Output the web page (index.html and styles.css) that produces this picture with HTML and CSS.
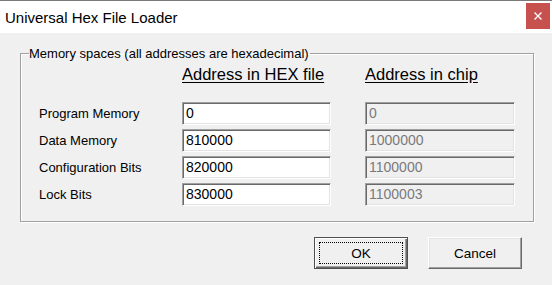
FILE: index.html
```html
<!DOCTYPE html>
<html>
<head>
<meta charset="utf-8">
<title>Universal Hex File Loader</title>
<link rel="stylesheet" href="styles.css">
</head>
<body>
<div class="window">
  <div class="titlebar">
    <span class="title">Universal Hex File Loader</span>
    <span class="close"><svg width="8" height="8" viewBox="0 0 8 8"><path d="M0.5 0.5 L7.5 7.5 M7.5 0.5 L0.5 7.5" stroke="#fff" stroke-width="1.4" fill="none"/></svg></span>
  </div>
  <div class="client">
    <fieldset class="group">
      <legend class="legend">Memory spaces (all addresses are hexadecimal)</legend>
      <div class="grid">
        <span></span>
        <span class="head">Address in HEX file</span>
        <span class="head">Address in chip</span>

        <span class="label">Program Memory</span>
        <span class="field">0</span>
        <span class="field off">0</span>

        <span class="label">Data Memory</span>
        <span class="field">810000</span>
        <span class="field off">1000000</span>

        <span class="label">Configuration Bits</span>
        <span class="field">820000</span>
        <span class="field off">1100000</span>

        <span class="label">Lock Bits</span>
        <span class="field">830000</span>
        <span class="field off">1100003</span>
      </div>
    </fieldset>
    <div class="buttons">
      <button class="btn default"><span class="focus">OK</span></button>
      <button class="btn">Cancel</button>
    </div>
  </div>
</div>
</body>
</html>
```
FILE: styles.css
```css
html, body {
  margin: 0;
  padding: 0;
  background: #f0f0f0;
}
.window {
  width: 552px;
  height: 285px;
  box-sizing: border-box;
  border-top: 1px solid #7a7a7a;
  font-family: "Liberation Sans", Arial, sans-serif;
  color: #000;
}
.titlebar {
  height: 32px;
  background: #fff;
  display: flex;
  align-items: flex-start;
  justify-content: space-between;
}
.title {
  font-size: 15px;
  line-height: 18px;
  padding: 8px 0 0 5px;
}
.close {
  width: 24px;
  height: 26px;
  margin: 2px 2px 0 0;
  background: #c7514f;
  display: flex;
  align-items: center;
  justify-content: center;
}
.close svg { display: block; }
.client {
  padding: 13px 0 0 0;
}
.group {
  margin: 0 0 0 20px;
  width: 514px;
  box-sizing: border-box;
  padding: 4px 0 15px 0;
  border: 1px solid #a0a0a0;
  box-shadow: inset 1px 1px 0 #fff, 1px 1px 0 #fff;
  min-inline-size: 0;
}
.legend {
  font-size: 13px;
  line-height: 15px;
  padding: 0 1px 0 0;
  margin-left: 8px;
}
.grid {
  display: grid;
  grid-template-columns: 109px 149px 150px;
  column-gap: 34px;
  row-gap: 4px;
  margin-left: 18px;
}
.head {
  font-size: 16.5px;
  line-height: 19px;
  text-decoration: underline;
  text-underline-offset: 2px;
  margin-bottom: 14px;
  white-space: nowrap;
}
.label {
  font-size: 13px;
  line-height: 23px;
  white-space: nowrap;
}
.field {
  height: 23px;
  box-sizing: border-box;
  background: #fff;
  border-style: solid;
  border-width: 1px;
  border-color: #a0a0a0 #fff #fff #a0a0a0;
  box-shadow: inset 1px 1px 0 #696969, inset -1px -1px 0 #e3e3e3;
  font-size: 14px;
  line-height: 21px;
  padding-left: 3px;
}
.field.off {
  background: #f0f0f0;
  color: #7a7a7a;
}
.buttons {
  display: flex;
  justify-content: flex-end;
  gap: 20px;
  padding: 15px 30px 0 0;
}
.btn {
  width: 94px;
  height: 32px;
  box-sizing: border-box;
  margin: 0;
  padding: 0;
  background: #f0f0f0;
  font-family: "Liberation Sans", Arial, sans-serif;
  font-size: 13.5px;
  color: #000;
  border-style: solid;
  border-width: 1px;
  border-color: #fff #696969 #696969 #fff;
  box-shadow: inset -1px -1px 0 #a0a0a0, inset 1px 1px 0 #e3e3e3;
  display: flex;
  align-items: center;
  justify-content: center;
}
.btn.default {
  border-color: #505050;
  box-shadow: inset 1px 1px 0 #fff, inset -1px -1px 0 #696969, inset -2px -2px 0 #a0a0a0;
  padding: 4px;
}
.focus {
  flex: 1;
  align-self: stretch;
  border: 1px dotted #000;
  display: flex;
  align-items: center;
  justify-content: center;
}
```
